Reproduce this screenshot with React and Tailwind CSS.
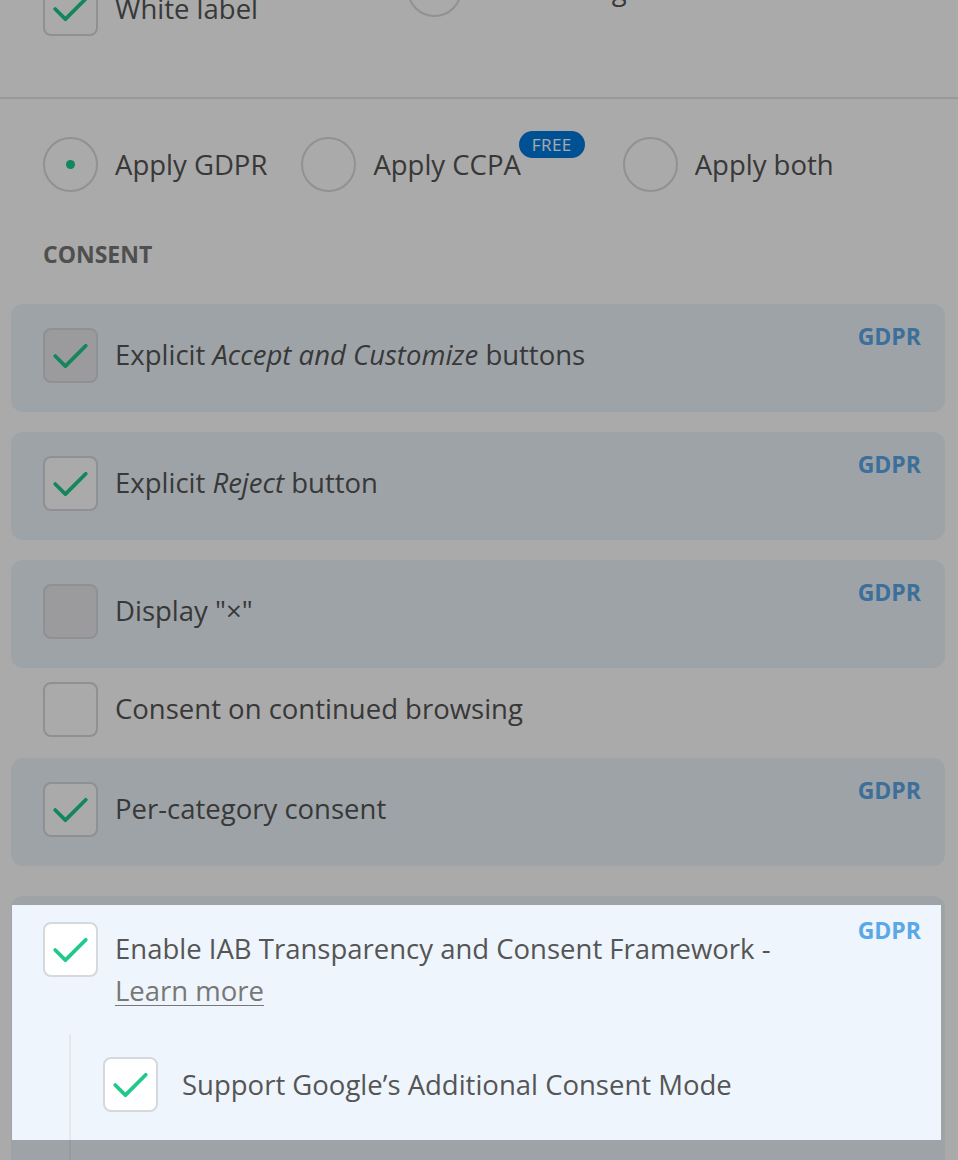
import React from 'react';

const font = { fontFamily: '"Open Sans", "Liberation Sans", sans-serif' };

function Check() {
  return (
    <svg viewBox="0 0 55 55" className="w-full h-full">
      <path d="M11 28 L22 39 L44 17" fill="none" stroke="#1fc98a" strokeWidth="4" strokeLinecap="round" strokeLinejoin="round" />
    </svg>
  );
}

function Box({ checked, shaded }) {
  return (
    <div
      className={`w-[55px] h-[55px] shrink-0 rounded-[8px] border-2 border-[#d5d8dd] ${shaded ? 'bg-[#e9e9ec]' : 'bg-white'}`}
    >
      {checked && <Check />}
    </div>
  );
}

function Radio({ on }) {
  return (
    <div className="w-[55px] h-[55px] shrink-0 rounded-full border-2 border-[#d7dae0] bg-white flex items-center justify-center">
      {on && <div className="w-[9px] h-[9px] rounded-full bg-[#1cc98a]" />}
    </div>
  );
}

function Gdpr() {
  return <span className="text-[23px] font-bold leading-[28px] text-[#5aa8e8] mt-[-6px]">GDPR</span>;
}

// one consent option, optionally inside the blue card
function Option({ checked, shaded, card = true, gdpr = true, children, className = '' }) {
  return (
    <div className={`flex items-start justify-between pl-8 pr-6 pt-6 pb-[29px] rounded-[12px] ${card ? 'bg-[#eef5fc]' : ''} ${className}`}>
      <div className="flex items-start gap-[17px]">
        <Box checked={checked} shaded={shaded} />
        <div className="pt-[6px] text-[27.5px] leading-[42px] text-[#555]">{children}</div>
      </div>
      {gdpr && <Gdpr />}
    </div>
  );
}

export default function App() {
  return (
    <div className="relative h-[1160px] overflow-hidden bg-white" style={font}>
      {/* tail of the previous section */}
      <section className="-mt-[38px] pb-[61px] border-b-2 border-[#e6e6e6] flex items-start pl-[43px]">
        <div className="w-[364px] pt-[19px]">
          <div className="flex items-center gap-[17px]">
            <Box checked />
            <span className="text-[27.5px] leading-[42px] text-[#555]">White label</span>
          </div>
        </div>
        <div className="flex items-center gap-[17px]">
          <Radio />
          <span className="text-[27.5px] leading-[42px] text-[#555]">Show a large banner</span>
        </div>
      </section>

      <section className="pt-[38px]">
        <div className="flex items-center gap-[34px] pl-[43px] text-[27.5px] text-[#555]">
          <label className="flex items-center gap-[17px]">
            <Radio on />
            <span>Apply GDPR</span>
          </label>
          <label className="flex items-center gap-[17px]">
            <Radio />
            <span>Apply CCPA</span>
            <span className="relative -top-[20px] -ml-[19px] mr-[4px] h-[27px] px-[13px] rounded-full bg-[#0078df] text-white text-[17px] leading-[27px] tracking-wide">
              FREE
            </span>
          </label>
          <label className="flex items-center gap-[17px]">
            <Radio />
            <span>Apply both</span>
          </label>
        </div>

        <h3 className="mt-[48px] mb-[36px] pl-[43px] text-[23px] font-bold leading-[28px] text-[#777]">CONSENT</h3>

        <div className="mx-[11px] w-[934px]">
          <Option checked shaded className="mb-5">
            Explicit <i>Accept and Customize</i> buttons
          </Option>
          <Option checked className="mb-5">
            Explicit <i>Reject</i> button
          </Option>
          <Option shaded>Display "×"</Option>
          <Option card={false} gdpr={false} className="!pt-[14px] !pb-[21px]">
            Consent on continued browsing
          </Option>
          <Option checked>Per-category consent</Option>

          <div className="mt-[30px] rounded-[12px] bg-[#eef5fc] pl-8 pr-6 pt-[26px]">
            <div className="flex items-start justify-between">
              <div className="flex items-start gap-[17px]">
                <Box checked />
                <div className="pt-[6px] text-[27.5px] leading-[42px] text-[#555]">
                  Enable IAB Transparency and Consent Framework -
                  <br />
                  <a className="underline underline-offset-[4px] decoration-1 text-[#777]">Learn more</a>
                </div>
              </div>
              <Gdpr />
            </div>
            <div className="ml-[26px] mt-[22px] border-l-2 border-[#e4e7eb] pl-8 pt-[23px] pb-[80px]">
              <div className="flex items-center gap-[24px]">
                <Box checked />
                <span className="text-[27.5px] leading-[42px] text-[#555]">Support Google’s Additional Consent Mode</span>
              </div>
            </div>
          </div>
        </div>
      </section>

      {/* tour spotlight */}
      <div className="pointer-events-none absolute left-[12px] top-[905px] w-[929px] h-[235px] shadow-[0_0_0_2000px_rgba(0,0,0,0.333)]" />
    </div>
  );
}
